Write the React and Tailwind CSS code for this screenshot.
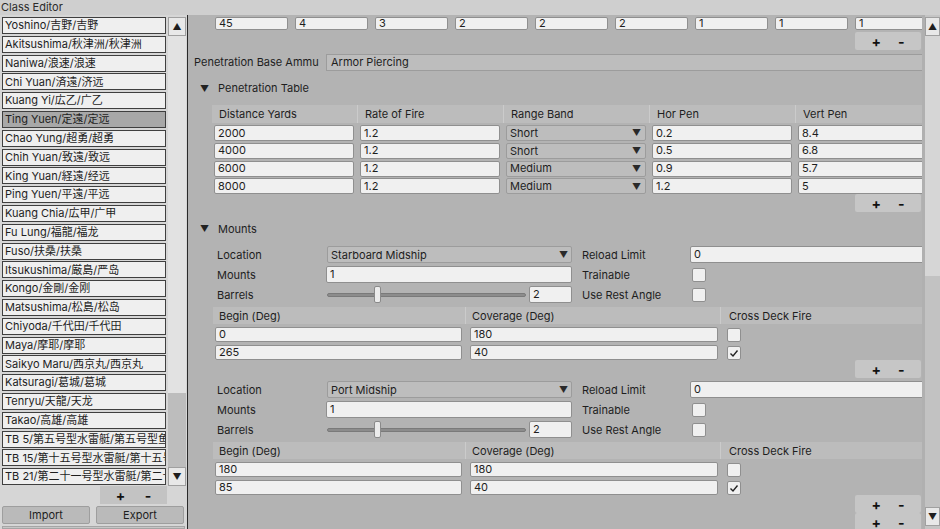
const ships = [
  "Yoshino/吉野/吉野",
  "Akitsushima/秋津洲/秋津洲",
  "Naniwa/浪速/浪速",
  "Chi Yuan/済遠/济远",
  "Kuang Yi/広乙/广乙",
  "Ting Yuen/定遠/定远",
  "Chao Yung/超勇/超勇",
  "Chih Yuan/致遠/致远",
  "King Yuan/経遠/经远",
  "Ping Yuen/平遠/平远",
  "Kuang Chia/広甲/广甲",
  "Fu Lung/福龍/福龙",
  "Fuso/扶桑/扶桑",
  "Itsukushima/厳島/严岛",
  "Kongo/金剛/金刚",
  "Matsushima/松島/松岛",
  "Chiyoda/千代田/千代田",
  "Maya/摩耶/摩耶",
  "Saikyo Maru/西京丸/西京丸",
  "Katsuragi/葛城/葛城",
  "Tenryu/天龍/天龙",
  "Takao/高雄/高雄",
  "TB 5/第五号型水雷艇/第五号型鱼雷艇",
  "TB 15/第十五号型水雷艇/第十五号型鱼雷艇",
  "TB 21/第二十一号型水雷艇/第二十一号型鱼雷艇",
];

const numbers = ["45", "4", "3", "2", "2", "2", "1", "1", "1"];

const penRows = [
  ["2000", "1.2", "Short", "0.2", "8.4"],
  ["4000", "1.2", "Short", "0.5", "6.8"],
  ["6000", "1.2", "Medium", "0.9", "5.7"],
  ["8000", "1.2", "Medium", "1.2", "5"],
];

const mounts = [
  { location: "Starboard Midship", arcs: [["0", "180", false], ["265", "40", true]] },
  { location: "Port Midship", arcs: [["180", "180", false], ["85", "40", true]] },
];

const Field = ({ value, className = "" }) => (
  <div
    className={`h-full shrink-0 bg-[#f0f0f0] border border-[#8f8f8f] rounded-[2px] pl-[3px] leading-none flex items-center whitespace-nowrap overflow-hidden ${className}`}
  >
    {value}
  </div>
);

const Dropdown = ({ value, className = "" }) => (
  <div
    className={`h-full shrink-0 bg-[#bdbdbd] border border-[#9c9c9c] rounded-[2px] pl-[3px] pr-[3px] flex items-center justify-between whitespace-nowrap overflow-hidden ${className}`}
  >
    <span>{value}</span>
    <span className="text-[9px] text-[#2a2a2a]">▼</span>
  </div>
);

const Check = ({ checked }) => (
  <div className="w-[14px] h-[14px] shrink-0 bg-[#f0f0f0] border border-[#8f8f8f] rounded-[2px] flex items-center justify-center">
    {checked && (
      <svg width="10" height="10" viewBox="0 0 10 10">
        <polyline points="1.5,5.5 4,8 8.5,2.5" fill="none" stroke="#222" strokeWidth="1.4" />
      </svg>
    )}
  </div>
);

const PlusMinus = ({ className = "" }) => (
  <div
    className={`ml-[667px] w-[66px] h-[18px] shrink-0 bg-[#c6c6c6] rounded-[2px] flex items-center justify-around px-[8px] text-[14px] font-bold text-[#111] ${className}`}
  >
    <span>+</span>
    <span>-</span>
  </div>
);

const Foldout = ({ label }) => (
  <div className="h-[17px] flex items-center">
    <span className="ml-[12px] w-[18px] text-[9px] text-[#222]">▼</span>
    <span>{label}</span>
  </div>
);

const MountBlock = ({ mount }) => (
  <div className="flex flex-col">
    <div className="h-[17px] flex items-center">
      <span className="ml-[29px] w-[110px] shrink-0">Location</span>
      <Dropdown value={mount.location} className="w-[245px]" />
      <span className="ml-[10px] w-[108px] shrink-0">Reload Limit</span>
      <Field value="0" className="w-[240px]" />
    </div>
    <div className="h-[17px] mt-[3px] flex items-center">
      <span className="ml-[29px] w-[110px] shrink-0">Mounts</span>
      <Field value="1" className="w-[246px] -ml-[1px]" />
      <span className="ml-[10px] w-[110px] shrink-0">Trainable</span>
      <Check />
    </div>
    <div className="h-[17px] mt-[3px] flex items-center">
      <span className="ml-[29px] w-[110px] shrink-0">Barrels</span>
      <div className="relative w-[199px] h-[17px] shrink-0 flex items-center">
        <div className="w-full h-[4px] bg-[#8c8c8c] border border-[#7a7a7a] rounded-[2px]" />
        <div className="absolute left-[47px] top-[0px] w-[7px] h-[17px] bg-[#ececec] border border-[#8a8a8a] rounded-[2px]" />
      </div>
      <Field value="2" className="w-[43px] ml-[3px]" />
      <span className="ml-[10px] w-[110px] shrink-0">Use Rest Angle</span>
      <Check />
    </div>
    <div className="h-[17px] mt-[4px] ml-[25px] w-[720px] shrink-0 flex bg-[#bcbcbc]">
      <div className="w-[253px] shrink-0 pl-[6px] flex items-center border-r border-[#cbcbcb]">Begin (Deg)</div>
      <div className="w-[255px] shrink-0 pl-[6px] flex items-center border-r border-[#cbcbcb]">Coverage (Deg)</div>
      <div className="flex-1 pl-[8px] flex items-center">Cross Deck Fire</div>
    </div>
    {mount.arcs.map((arc, i) => (
      <div key={i} className="h-[15px] mt-[3px] ml-[27px] flex items-center">
        <Field value={arc[0]} className="w-[247px]" />
        <Field value={arc[1]} className="w-[248px] ml-[8px]" />
        <div className="ml-[9px]">
          <Check checked={arc[2]} />
        </div>
      </div>
    ))}
    <PlusMinus />
  </div>
);

export default function App() {
  return (
    <div className="w-[940px] h-[529px] overflow-hidden bg-[#cfcfcf] flex flex-col font-['Inter','Noto_Sans_CJK_JP',sans-serif] text-[11px] text-[#1e1e1e]">
      <div className="h-[15px] pl-[1px] flex items-center text-[#2b2b2b] leading-none">Class Editor</div>
      <div className="flex-1 flex min-h-0">
        {/* Left list panel */}
        <aside className="w-[187px] bg-[#d6d6d6] flex flex-col">
          <div className="flex mt-[2px]">
            <div className="w-[166px] pl-[2px] flex flex-col gap-[1.8px]">
              {ships.map((s, i) => (
                <div
                  key={i}
                  className={`h-[17px] border border-[#3f3f3f] pl-[2px] flex items-center whitespace-nowrap overflow-hidden ${
                    i === 5 ? "bg-[#a8a8a8]" : "bg-[#efefef]"
                  }`}
                >
                  {s}
                </div>
              ))}
            </div>
            <div className="w-[18px] ml-[2px] flex flex-col h-[469px]">
              <div className="h-[19px] bg-[#e8e8e8] border border-[#a0a0a0] flex items-center justify-center text-[9px]">▲</div>
              <div className="flex-1 bg-[#e2e2e2] flex flex-col">
                <div className="flex-1" />
                <div className="h-[74px] bg-[#bdbdbd]" />
              </div>
              <div className="h-[19px] bg-[#e8e8e8] border border-[#a0a0a0] flex items-center justify-center text-[9px]">▼</div>
            </div>
          </div>
          <div className="ml-[100px] w-[67px] h-[18px] bg-[#c3c3c3] flex items-center justify-around px-[6px] text-[14px] font-bold text-[#111]">
            <span>+</span>
            <span>-</span>
          </div>
          <div className="flex gap-[6px] px-[2px] mt-[2px]">
            <div className="w-[88px] h-[18px] bg-[#bababa] border border-[#9e9e9e] rounded-[2px] flex items-center justify-center">Import</div>
            <div className="w-[88px] h-[18px] bg-[#bababa] border border-[#9e9e9e] rounded-[2px] flex items-center justify-center">Export</div>
          </div>
          <div className="mt-[2px] mx-[2px] h-[6px] bg-[#c6c6c6] border border-[#a5a5a5]" />
        </aside>
        <div className="w-[1px] bg-[#2a2a2a]" />

        {/* Main inspector */}
        <main className="w-[734px] bg-[#b3b3b3] overflow-hidden flex flex-col">
          <div className="h-[15px] mt-[2px] pl-[27px] flex gap-[7px]">
            {numbers.map((n, i) => (
              <Field key={i} value={n} className="w-[73px]" />
            ))}
          </div>
          <PlusMinus className="mt-[2px]" />
          <div className="h-[17px] mt-[4px] flex items-center">
            <span className="ml-[6px] w-[132px] shrink-0 whitespace-nowrap">Penetration Base Ammu</span>
            <div className="flex-1 h-full bg-[#bdbdbd] border-y border-l border-[#9c9c9c] pl-[4px] flex items-center">Armor Piercing</div>
          </div>
          <div className="mt-[9px]">
            <Foldout label="Penetration Table" />
          </div>
          <div className="mt-[8px] ml-[24px] w-[730px] shrink-0 h-[18px] flex bg-[#bcbcbc]">
            {["Distance Yards", "Rate of Fire", "Range Band", "Hor Pen", "Vert Pen"].map((h, i) => (
              <div key={i} className="w-[146px] shrink-0 pl-[7px] flex items-center border-r border-[#cbcbcb]">
                {h}
              </div>
            ))}
          </div>
          <div className="mt-[2px] ml-[26px] flex flex-col gap-[1.8px]">
            {penRows.map((r, i) => (
              <div key={i} className="h-[16px] flex gap-[6px]">
                <Field value={r[0]} className="w-[140px]" />
                <Field value={r[1]} className="w-[140px]" />
                <Dropdown value={r[2]} className="w-[140px] pr-[4px]" />
                <Field value={r[3]} className="w-[140px]" />
                <Field value={r[4]} className="w-[140px]" />
              </div>
            ))}
          </div>
          <PlusMinus />
          <div className="mt-[8px]">
            <Foldout label="Mounts" />
          </div>
          <div className="mt-[9px] flex flex-col gap-[3px]">
            {mounts.map((m, i) => (
              <MountBlock key={i} mount={m} />
            ))}
          </div>
          <PlusMinus />
        </main>
        <div className="w-[3px] bg-[#b0b0b0]" />

        {/* Right scrollbar */}
        <div className="w-[15px] flex flex-col pt-[2px] pb-[3px] bg-[#c4c4c4]">
          <div className="h-[19px] bg-[#e8e8e8] border border-[#a0a0a0] flex items-center justify-center text-[9px]">▲</div>
          <div className="flex-1 flex flex-col">
            <div className="h-[240px] bg-[#d6d6d6]" />
            <div className="flex-1 bg-[#c2c2c2]" />
          </div>
          <div className="h-[19px] bg-[#e8e8e8] border border-[#a0a0a0] flex items-center justify-center text-[9px]">▼</div>
        </div>
      </div>
    </div>
  );
}
